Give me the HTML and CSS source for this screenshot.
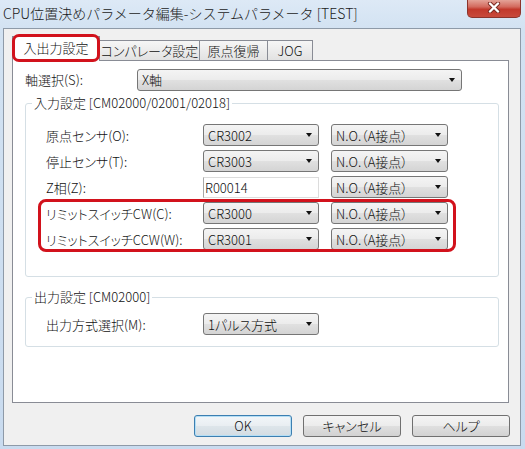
FILE: index.html
```html
<!DOCTYPE html>
<html lang="ja">
<head>
<meta charset="utf-8">
<title>CPU位置決めパラメータ編集</title>
<link rel="stylesheet" href="styles.css">
</head>
<body>
<div class="window">
  <div class="titlebar">
    <div class="title">CPU位置決めパラメータ編集-システムパラメータ [TEST]</div>
    <div class="close">
      <svg width="14" height="11" viewBox="0 0 14 11">
        <path d="M3 1.5 L11 9.5 M11 1.5 L3 9.5" stroke="#7a2a22" stroke-width="4.2" stroke-linecap="round" fill="none"/>
        <path d="M3 1.5 L11 9.5 M11 1.5 L3 9.5" stroke="#ffffff" stroke-width="2.4" stroke-linecap="round" fill="none"/>
      </svg>
    </div>
  </div>
  <div class="client">
    <div class="tabs">
      <div class="tab active">入出力設定</div>
      <div class="tab t2">コンパレータ設定</div>
      <div class="tab t3">原点復帰</div>
      <div class="tab t4">JOG</div>
    </div>
    <div class="panel">
      <div class="axis-row">
        <span class="label axis-label">軸選択(S):</span>
        <div class="combo axis-combo"><span>X軸</span><i class="arrow"></i></div>
      </div>
      <fieldset class="group group-in">
        <legend>入力設定 [CM02000/02001/02018]</legend>
        <div class="rows">
          <div class="row">
            <span class="label">原点センサ(O):</span>
            <div class="combo c1"><span>CR3002</span><i class="arrow"></i></div>
            <div class="combo c2"><span>N.O.（A接点）</span><i class="arrow"></i></div>
          </div>
          <div class="row">
            <span class="label">停止センサ(T):</span>
            <div class="combo c1"><span>CR3003</span><i class="arrow"></i></div>
            <div class="combo c2"><span>N.O.（A接点）</span><i class="arrow"></i></div>
          </div>
          <div class="row">
            <span class="label">Z相(Z):</span>
            <div class="textbox c1">R00014</div>
            <div class="combo c2"><span>N.O.（A接点）</span><i class="arrow"></i></div>
          </div>
          <div class="hl">
            <div class="row">
              <span class="label">リミットスイッチCW(C):</span>
              <div class="combo c1"><span>CR3000</span><i class="arrow"></i></div>
              <div class="combo c2"><span>N.O.（A接点）</span><i class="arrow"></i></div>
            </div>
            <div class="row">
              <span class="label">リミットスイッチCCW(W):</span>
              <div class="combo c1"><span>CR3001</span><i class="arrow"></i></div>
              <div class="combo c2"><span>N.O.（A接点）</span><i class="arrow"></i></div>
            </div>
          </div>
        </div>
      </fieldset>
      <fieldset class="group group-out">
        <legend>出力設定 [CM02000]</legend>
        <div class="rows">
          <div class="row">
            <span class="label">出力方式選択(M):</span>
            <div class="combo c1"><span>1パルス方式</span><i class="arrow"></i></div>
          </div>
        </div>
      </fieldset>
    </div>
    <div class="buttons">
      <div class="btn default">OK</div>
      <div class="btn">キャンセル</div>
      <div class="btn">ヘルプ</div>
    </div>
  </div>
</div>
</body>
</html>
```
FILE: styles.css
```css
* { box-sizing: border-box; }
html, body { margin: 0; padding: 0; }
body {
  width: 525px;
  height: 449px;
  overflow: hidden;
  background: #cddef0;
  font-family: "Noto Sans CJK JP", sans-serif;
  font-size: 13px;
  font-weight: 300;
  color: #111;
  font-feature-settings: "palt" 1;
}
.window {
  width: 525px;
  height: 449px;
  display: flex;
  flex-direction: column;
  background: linear-gradient(#dde9f6, #d2e2f2 30px, #c9dbef);
}
.titlebar {
  height: 28px;
  display: flex;
  align-items: flex-start;
  flex-shrink: 0;
}
.title {
  padding: 3px 0 0 3px;
  font-size: 14px;
  line-height: 20px;
  color: #1b1b1b;
  font-feature-settings: normal;
  white-space: nowrap;
}
.close {
  margin-left: auto;
  margin-right: 4px;
  width: 54px;
  height: 18px;
  border: 1px solid #8c342c;
  border-top: none;
  border-radius: 0 0 5px 5px;
  background: linear-gradient(#e4a398, #d36a5e 40%, #c2392c 55%, #c84a3c);
  display: flex;
  justify-content: center;
  padding-top: 2px;
}
.client {
  flex: 1;
  margin: 0 4px 3px 3px;
  border: 1px solid #8e9aa8;
  background: #f0f0f0;
  padding: 7px 11px 0 8px;
  display: flex;
  flex-direction: column;
}
.tabs {
  display: flex;
  align-items: flex-end;
  height: 24px;
}
.tab {
  height: 20px;
  border: 1px solid #898c95;
  border-bottom: none;
  background: linear-gradient(#f6f6f6, #ececec 50%, #e2e2e2);
  margin-left: -1px;
  text-align: center;
  line-height: 19px;
  white-space: nowrap;
}
.tab.active {
  position: relative;
  z-index: 2;
  margin-left: 0;
  width: 88px;
  height: 25px;
  margin-bottom: -1px;
  background: #fff;
  line-height: 22px;
}
.tab.active::after {
  content: "";
  position: absolute;
  top: -3px;
  left: -1px;
  right: -1px;
  bottom: -1px;
  border: 3px solid #d2121c;
  border-radius: 7px;
}
.t2 { width: 101px; }
.t3 { width: 69px; }
.t4 { width: 46px; }
.panel {
  height: 343px;
  border: 1px solid #898c95;
  background: #fff;
  padding: 7px 9px 0 12px;
  flex-shrink: 0;
}
.axis-row {
  display: flex;
  align-items: center;
  height: 23px;
}
.axis-label { width: 112px; }
.axis-combo { width: 325px; height: 23px; }
.label { white-space: nowrap; }
.combo {
  display: flex;
  align-items: center;
  height: 22px;
  border: 1px solid #767676;
  border-radius: 3px;
  background: linear-gradient(#f4f4f4, #ececec 48%, #e0e0e0 52%, #d4d4d4);
  padding-left: 4px;
  white-space: nowrap;
}
.arrow {
  margin-left: auto;
  margin-right: 6px;
  width: 0;
  height: 0;
  border-left: 3.5px solid transparent;
  border-right: 3.5px solid transparent;
  border-top: 4px solid #111;
}
.group {
  margin: 0;
  min-width: 0;
  border: 1px solid #d5dfe5;
  border-radius: 3px;
}
.group legend {
  padding: 0 2px;
  line-height: 16px;
}
.group-in {
  margin-top: 4px;
  padding: 13px 0 26px 6px;
}
.group-out {
  margin-top: 12px;
  padding: 8px 0 11px 6px;
}
.rows {
  margin-left: 14px;
  width: 402px;
  display: flex;
  flex-direction: column;
  gap: 4px;
}
.row {
  display: flex;
  align-items: center;
  height: 22px;
}
.row .label { width: 157px; }
.c1 { width: 116px; }
.c2 { width: 117px; margin-left: 12px; }
.textbox {
  height: 21px;
  border: 1px solid #dcdcdc;
  border-left-color: #a8a8a8;
  background: #fff;
  padding-left: 1px;
  line-height: 19px;
}
.hl {
  position: relative;
  display: flex;
  flex-direction: column;
  gap: 4px;
}
.hl::after {
  content: "";
  position: absolute;
  top: -3px;
  bottom: -2px;
  left: -8px;
  right: -8px;
  border: 3px solid #d2121c;
  border-radius: 8px;
}
.buttons {
  display: flex;
  justify-content: flex-end;
  gap: 11px;
  margin-top: 12px;
  margin-right: -1px;
}
.btn {
  width: 98px;
  height: 22px;
  border: 1px solid #707070;
  border-radius: 3px;
  background: linear-gradient(#f4f4f4, #ececec 48%, #dfdfdf 52%, #d2d2d2);
  text-align: center;
  line-height: 20px;
}
.btn.default {
  border-color: #3c7fb1;
  box-shadow: inset 0 0 0 1px #b4def5;
  background: linear-gradient(#f2f6f9, #e9eef2 48%, #dde5ea 52%, #d3dce2);
}
```
